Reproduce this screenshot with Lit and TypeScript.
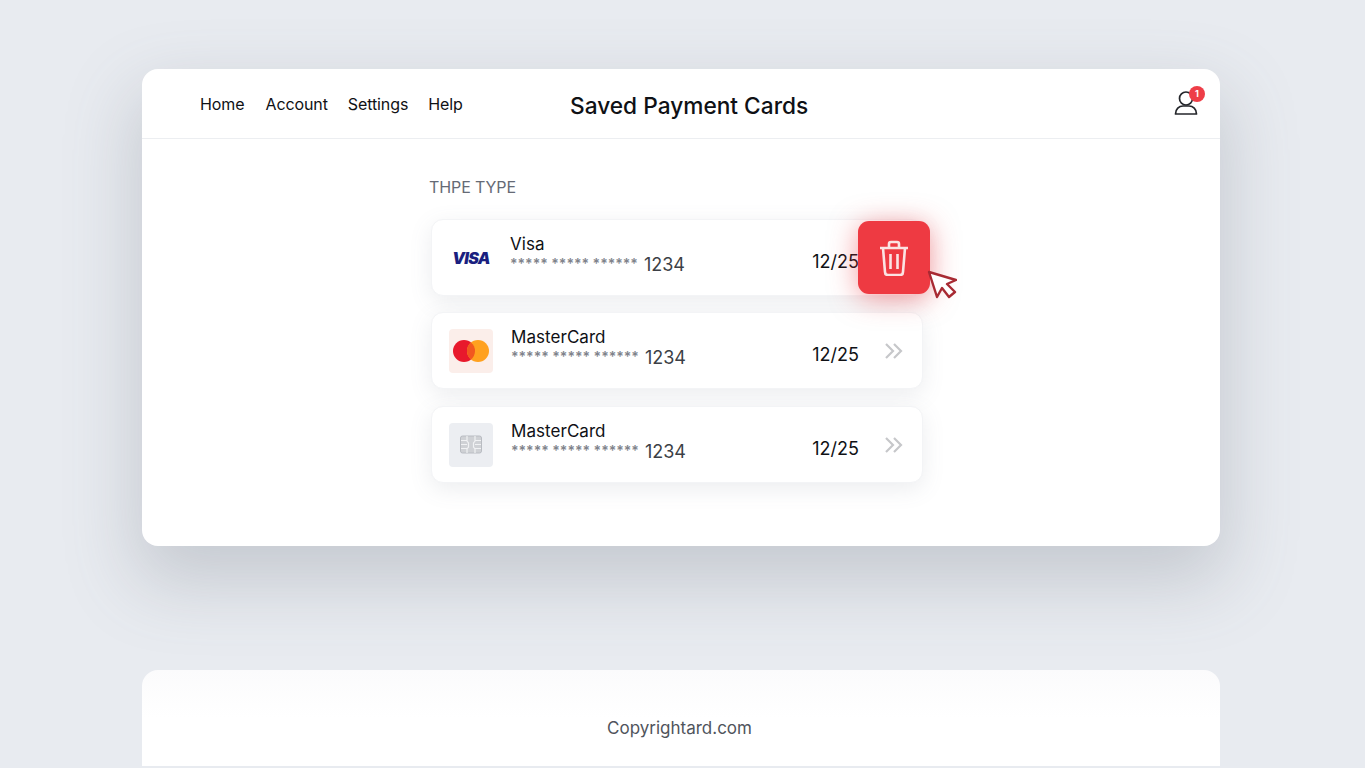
import {LitElement, html, css, svg} from 'lit';
import {customElement} from 'lit/decorators.js';

type SavedCard = {name: string; logo: 'visa' | 'mc' | 'chip'; shift: number};

const cards: SavedCard[] = [
  {name: 'Visa', logo: 'visa', shift: 0},
  {name: 'MasterCard', logo: 'mc', shift: 1},
  {name: 'MasterCard', logo: 'chip', shift: 1},
];

const chipIcon = svg`<svg width="22" height="20" viewBox="0 0 22 20" fill="none">
  <rect x="0.5" y="1" width="21" height="17" rx="2" fill="#cfd1d5" stroke="#b9bcc2"/>
  <path d="M1 5.500h6M1 9.500h6M1 13.500h6M15 5.500h6M15 9.500h6M15 13.500h6M7 1v5l1.500 2v4L7 14v4M15 1v5l-1.500 2v4l1.500 2v4" stroke="#f1f2f4" stroke-width="1.2"/>
</svg>`;

const rings = svg`<svg width="36" height="22" viewBox="0 0 36 22">
  <circle cx="11" cy="11" r="11" fill="#e8192c"/>
  <circle cx="25" cy="11" r="11" fill="#ffa11f"/>
  <path d="M18 2.500a11 11 0 0 1 0 17a11 11 0 0 1 0-17z" fill="#f2581f"/>
</svg>`;

const chevrons = svg`<svg width="18" height="16" viewBox="0 0 18 16" fill="none" stroke="#c6c7ca" stroke-width="2.2">
  <path d="M1 1l7 7-7 7M9 1l7 7-7 7"/>
</svg>`;

@customElement('app-root')
export class AppRoot extends LitElement {
  static styles = css`
    :host {
      display: block;
      height: 768px;
      overflow: hidden;
      background: #e8ebf0;
      font-family: Inter, 'Liberation Sans', sans-serif;
      color: #0f1115;
      padding: 69px 145px 0 142px;
      box-sizing: border-box;
    }

    .panel {
      height: 477px;
      background: #fff;
      border-radius: 16px;
      box-shadow: 0 30px 70px 6px #5f687540;
    }

    .top {
      height: 70px;
      box-sizing: border-box;
      display: flex;
      align-items: center;
      padding: 0 22px 0 58px;
      border-bottom: 1px solid #eceef1;
    }

    nav {
      width: 370px;
      display: flex;
      gap: 20px;
      font-size: 16px;
      letter-spacing: -0.1px;
    }

    nav a:first-child {
      margin-right: 1px;
    }

    h1 {
      margin: 0;
      font-size: 22.7px;
      font-weight: 500;
      line-height: 1;
      position: relative;
      top: 3px;
    }

    .user {
      margin-left: auto;
      position: relative;
      width: 24px;
      height: 26px;
      margin-top: -2px;
    }

    .user i {
      position: absolute;
      top: -4px;
      right: -7px;
      width: 16px;
      height: 16px;
      border-radius: 50%;
      background: #ee3e48;
      color: #fff;
      font: 700 9px/16px Inter, sans-serif;
      text-align: center;
    }

    .content {
      padding: 38px 0 0 287px;
    }

    .label {
      font-size: 16px;
      line-height: 20px;
      color: #656a75;
      letter-spacing: -0.1px;
    }

    .list {
      position: relative;
      width: 492px;
      margin: 22px 0 0 2px;
      display: flex;
      flex-direction: column;
      gap: 16px;
    }

    .row {
      height: 77px;
      box-sizing: border-box;
      display: flex;
      align-items: center;
      padding: 0 19px 0 17px;
      background: #fff;
      border: 1px solid #f3f4f6;
      border-radius: 12px;
      box-shadow: 0 6px 22px #6b738020;
    }

    .row:nth-of-type(3) {
      margin-top: 1px;
    }

    .logo {
      width: 44px;
      height: 44px;
      border-radius: 4px;
      display: flex;
      align-items: center;
      justify-content: center;
      flex: none;
    }

    .logo.mc {
      background: #fbeeea;
    }

    .logo.chip {
      background: #eceef2;
    }

    .visa {
      font: italic 900 16px/1 Inter, sans-serif;
      color: #1a1f80;
      letter-spacing: -0.7px;
    }

    .text {
      margin: -5px 0 0 17px;
      flex: 1;
    }

    .text.shift {
      margin-left: 18px;
    }

    .name {
      font-size: 17px;
      line-height: 20px;
      letter-spacing: 0.05px;
    }

    .number {
      display: flex;
      align-items: baseline;
      gap: 6px;
      font-size: 18px;
      line-height: 22px;
      color: #3c3f46;
    }

    .stars {
      font-size: 14px;
      font-weight: 600;
      color: #80838b;
      letter-spacing: 0;
      position: relative;
      top: -2px;
    }

    .date {
      font-size: 18px;
      margin: 7px 26px 0 0;
    }

    .arrows {
      display: flex;
      width: 18px;
    }

    .trash {
      position: absolute;
      left: 427px;
      top: 2px;
      width: 72px;
      height: 73px;
      border-radius: 11px;
      background: #ee3a42;
      box-shadow: 0 4px 28px #ee3a4280;
      display: flex;
      align-items: center;
      justify-content: center;
    }

    .pointer {
      position: absolute;
      left: 496px;
      top: 51px;
    }

    .foot {
      margin-top: 124px;
      height: 96px;
      background: linear-gradient(#fbfbfc, #fff 50%);
      border-radius: 16px 16px 0 0;
      display: flex;
      align-items: center;
      justify-content: center;
      padding-right: 3px;
      font-size: 17px;
      color: #50545c;
      padding-top: 20px;
      box-sizing: border-box;
    }
  `;

  renderLogo(logo: SavedCard['logo']) {
    if (logo == 'visa') return html`<div class="logo"><span class="visa">VISA</span></div>`;
    if (logo == 'mc') return html`<div class="logo mc">${rings}</div>`;
    return html`<div class="logo chip">${chipIcon}</div>`;
  }

  render() {
    return html`
      <section class="panel">
        <header class="top">
          <nav>
            <a>Home</a>
            <a>Account</a>
            <a>Settings</a>
            <a>Help</a>
          </nav>
          <h1>Saved Payment Cards</h1>
          <div class="user">
            <svg width="24" height="26" viewBox="0 0 24 26" fill="none" stroke="#24262b" stroke-width="1.7">
              <circle cx="12" cy="8.500" r="6.500"/>
              <path d="M1.500 24c0-5 3.500-8 7.500-8h6c4 0 7.500 3 7.500 8z" stroke-linejoin="round"/>
            </svg>
            <i>1</i>
          </div>
        </header>
        <div class="content">
          <div class="label">THPE TYPE</div>
          <div class="list">
            ${cards.map(
              (c) => html`
                <div class="row">
                  ${this.renderLogo(c.logo)}
                  <div class="text ${c.shift ? 'shift' : ''}">
                    <div class="name">${c.name}</div>
                    <div class="number"><span class="stars">***** ***** ******</span><span>1234</span></div>
                  </div>
                  <div class="date">12/25</div>
                  <div class="arrows">${chevrons}</div>
                </div>
              `,
            )}
            <div class="trash">
              <svg width="30" height="36" viewBox="0 0 30 36" fill="none" stroke="#fbe3e3" stroke-width="2.6" stroke-linejoin="round">
                <path d="M1 8h28M10 8V4q0-2 2-2h6q2 0 2 2v4"/>
                <path d="M4 8l2 24q0 3 3 3h12q3 0 3-3l2-24"/>
                <path d="M11.500 14v15M18.500 14v15"/>
              </svg>
            </div>
            <svg class="pointer" width="30" height="30" viewBox="0 0 30 30" fill="#fff" stroke="#a82a33" stroke-width="2.400" stroke-linejoin="round">
              <path d="M2 2l8 25 5-9 7 9 6-5-8-8 9-4z"/>
            </svg>
          </div>
        </div>
      </section>
      <footer class="foot">Copyrightard.com</footer>
    `;
  }
}
